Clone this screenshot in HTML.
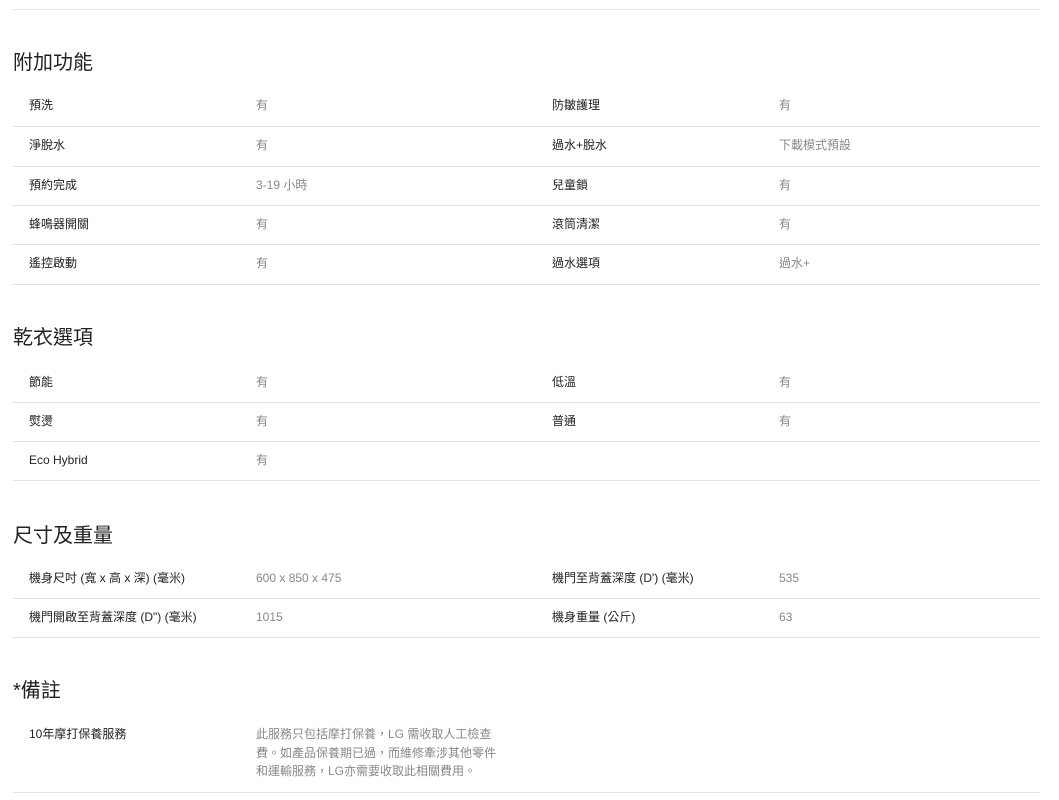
<!DOCTYPE html>
<html><head><meta charset="utf-8"><style>
body{margin:0;width:1059px;height:800px;background:#fff;position:relative;overflow:hidden;font-family:"Liberation Sans","Noto Sans CJK TC",sans-serif;}
.top{position:absolute;left:13px;width:1027px;top:9px;border-top:1px solid #e6e6e6}
h2{position:absolute;left:13px;margin:0;font-size:20px;font-weight:normal;color:#222;line-height:24px}
.r{position:absolute;left:13px;width:1027px;border-bottom:1px solid #e2e2e2;font-size:12px;line-height:16px}
.r span{position:absolute;top:10px;white-space:nowrap}
.a{left:16px;color:#222}.b{left:243px;color:#888}.c{left:539px;color:#222}.d{left:766px;color:#888}
</style></head><body>
<div class="top"></div>
<h2 style="top:51px">附加功能</h2>
<div class="r" style="top:87px;height:39px"><span class="a">預洗</span><span class="b">有</span><span class="c">防皺護理</span><span class="d">有</span></div>
<div class="r" style="top:127px;height:39px"><span class="a">淨脫水</span><span class="b">有</span><span class="c">過水+脫水</span><span class="d">下載模式預設</span></div>
<div class="r" style="top:167px;height:38px"><span class="a">預約完成</span><span class="b">3-19 小時</span><span class="c">兒童鎖</span><span class="d">有</span></div>
<div class="r" style="top:206px;height:38px"><span class="a">蜂鳴器開關</span><span class="b">有</span><span class="c">滾筒清潔</span><span class="d">有</span></div>
<div class="r" style="top:245px;height:39px"><span class="a">遙控啟動</span><span class="b">有</span><span class="c">過水選項</span><span class="d">過水+</span></div>
<h2 style="top:326px">乾衣選項</h2>
<div class="r" style="top:364px;height:38px"><span class="a">節能</span><span class="b">有</span><span class="c">低溫</span><span class="d">有</span></div>
<div class="r" style="top:403px;height:38px"><span class="a">熨燙</span><span class="b">有</span><span class="c">普通</span><span class="d">有</span></div>
<div class="r" style="top:442px;height:38px"><span class="a">Eco Hybrid</span><span class="b">有</span></div>
<h2 style="top:524px">尺寸及重量</h2>
<div class="r" style="top:560px;height:38px"><span class="a">機身尺吋 (寬 x 高 x 深) (毫米)</span><span class="b">600 x 850 x 475</span><span class="c">機門至背蓋深度 (D') (毫米)</span><span class="d">535</span></div>
<div class="r" style="top:599px;height:38px"><span class="a">機門開啟至背蓋深度 (D") (毫米)</span><span class="b">1015</span><span class="c">機身重量 (公斤)</span><span class="d">63</span></div>
<h2 style="top:679px">*備註</h2>
<div class="r" style="top:716px;height:76px;line-height:18.5px"><span class="a" style="top:9px">10年摩打保養服務</span><span class="b" style="top:9px">此服務只包括摩打保養，LG 需收取人工檢查<br>費。如產品保養期已過，而維修牽涉其他零件<br>和運輸服務，LG亦需要收取此相關費用。</span></div>
</body></html>
